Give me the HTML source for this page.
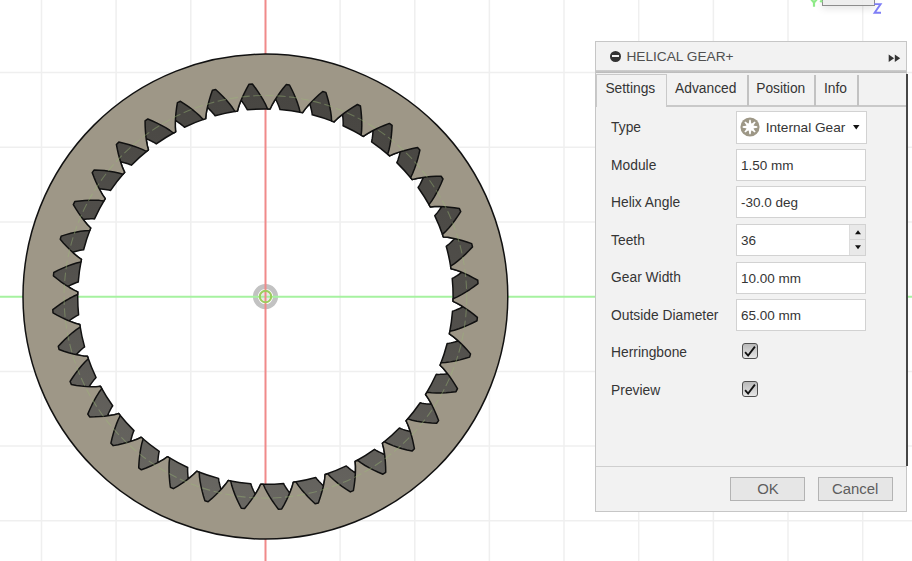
<!DOCTYPE html>
<html><head><meta charset="utf-8">
<style>
*{margin:0;padding:0;box-sizing:border-box}
html,body{width:912px;height:561px;overflow:hidden;background:#fff;font-family:"Liberation Sans",sans-serif}
#vp{position:absolute;left:0;top:0;width:912px;height:561px}
.panel{position:absolute;left:595px;top:41px;width:312px;height:471px;background:#f2f2f2;border:1px solid #c6c6c6}
.abs{position:absolute}
.txt{position:absolute;font-size:13.8px;line-height:16px;color:#353535;white-space:nowrap}
.hdrline{position:absolute;left:0;top:28px;width:310px;height:3px;background:linear-gradient(#cfcfcf,#b9b9b9)}
.ic{position:absolute;left:13.9px;top:8.7px;width:11.2px;height:11.2px;border-radius:50%;background:#333}
.ic:after{content:"";position:absolute;left:2.5px;top:4.6px;width:6.2px;height:2px;background:#f2f2f2}
.sep{position:absolute;top:33px;width:1.5px;height:31px;background:#c2c2c2}
.tabline{position:absolute;left:0;top:63px;width:310px;height:2px;background:#c9c9c9}
.box{position:absolute;left:140px;width:130px;height:32px;background:#fff;border:1px solid #d2d2d2}
.cb{position:absolute;left:146px;width:16px;height:16px;border:1.5px solid #4e4e4e;border-radius:3px;background:linear-gradient(#b9b9b9,#e6e6e6)}
.btn{position:absolute;top:435px;width:75px;height:24px;border:1px solid #b3b3b3;background:#e6e6e6}
.btxt{position:absolute;font-size:14.9px;line-height:16px;color:#5e5e5e;white-space:nowrap}
</style></head><body>
<div id="vp">
<svg width="912" height="561" style="position:absolute;left:0;top:0">
<g id="grid" stroke="#efefef" stroke-width="1.5">
<line x1="41.5" y1="0" x2="41.5" y2="561"/>
<line x1="116.1" y1="0" x2="116.1" y2="561"/>
<line x1="190.8" y1="0" x2="190.8" y2="561"/>
<line x1="340.1" y1="0" x2="340.1" y2="561"/>
<line x1="414.8" y1="0" x2="414.8" y2="561"/>
<line x1="489.4" y1="0" x2="489.4" y2="561"/>
<line x1="564.0" y1="0" x2="564.0" y2="561"/>
<line x1="638.7" y1="0" x2="638.7" y2="561"/>
<line x1="713.4" y1="0" x2="713.4" y2="561"/>
<line x1="788.0" y1="0" x2="788.0" y2="561"/>
<line x1="862.7" y1="0" x2="862.7" y2="561"/>
<line x1="0" y1="72.5" x2="912" y2="72.5"/>
<line x1="0" y1="147.2" x2="912" y2="147.2"/>
<line x1="0" y1="221.9" x2="912" y2="221.9"/>
<line x1="0" y1="371.4" x2="912" y2="371.4"/>
<line x1="0" y1="446.1" x2="912" y2="446.1"/>
<line x1="0" y1="520.8" x2="912" y2="520.8"/>
</g>
<defs><filter id="bl" x="-50%" y="-50%" width="200%" height="200%"><feGaussianBlur stdDeviation="0.6"/></filter></defs>
<circle cx="265.5" cy="296.6" r="10.1" fill="none" stroke="#c2c2c2" stroke-width="5" filter="url(#bl)"/>
<circle cx="265.5" cy="296.6" r="4.5" fill="#e9e9e9"/>
<line x1="0" y1="296.8" x2="912" y2="296.8" stroke="#a6f2a0" stroke-width="2"/>
<line x1="265.5" y1="0" x2="265.5" y2="561" stroke="#f08a8a" stroke-width="2"/>
<defs><linearGradient id="dk" x1="0.6" y1="0" x2="0.4" y2="1"><stop offset="0" stop-color="#474541"/><stop offset="0.5" stop-color="#52504c"/><stop offset="1" stop-color="#6a6863"/></linearGradient></defs>
<path d="M48.40 296.60 A217.00 217.00 0 1 1 482.40 296.60 A217.00 217.00 0 1 1 48.40 296.60 Z M270.15 108.96 L270.86 107.28 L271.70 105.60 L272.60 103.94 L273.55 102.27 L274.55 100.62 L275.58 98.96 L276.44 100.71 L277.27 102.46 L278.04 104.22 L278.77 105.97 L279.43 107.72 L279.96 109.47 A187.70 187.70 0 0 1 302.66 112.64 L302.66 112.64 L303.65 111.10 L304.77 109.60 L305.95 108.11 L307.17 106.64 L308.44 105.18 L309.75 103.74 L310.29 105.61 L310.80 107.47 L311.26 109.33 L311.67 111.19 L312.02 113.03 L312.24 114.84 A187.70 187.70 0 0 1 334.04 121.90 L334.04 121.90 L335.28 120.56 L336.64 119.28 L338.06 118.02 L339.53 116.78 L341.03 115.56 L342.57 114.37 L342.78 116.30 L342.95 118.23 L343.08 120.14 L343.16 122.04 L343.19 123.91 L343.09 125.73 A187.70 187.70 0 0 1 363.33 136.47 L363.33 136.47 L364.79 135.37 L366.35 134.34 L367.97 133.35 L369.62 132.38 L371.32 131.45 L373.04 130.53 L372.91 132.48 L372.74 134.41 L372.54 136.31 L372.29 138.19 L371.99 140.04 L371.58 141.82 A187.70 187.70 0 0 1 389.65 155.91 L389.65 155.91 L391.27 155.08 L392.99 154.34 L394.76 153.64 L396.56 152.98 L398.39 152.35 L400.24 151.75 L399.77 153.64 L399.28 155.51 L398.75 157.35 L398.18 159.16 L397.56 160.93 L396.84 162.61 A187.70 187.70 0 0 1 412.19 179.63 L412.19 179.63 L413.94 179.09 L415.76 178.65 L417.62 178.27 L419.50 177.93 L421.41 177.63 L423.34 177.36 L422.56 179.15 L421.74 180.90 L420.90 182.62 L420.03 184.31 L419.11 185.94 L418.11 187.47 A187.70 187.70 0 0 1 430.28 206.89 L430.28 206.89 L432.09 206.67 L433.96 206.56 L435.85 206.50 L437.77 206.50 L439.70 206.53 L441.65 206.60 L440.57 208.22 L439.46 209.81 L438.33 211.36 L437.18 212.86 L435.99 214.31 L434.74 215.65 A187.70 187.70 0 0 1 443.35 236.89 L443.35 236.89 L445.17 236.98 L447.03 237.19 L448.91 237.47 L450.80 237.80 L452.69 238.17 L454.60 238.58 L453.25 239.98 L451.89 241.35 L450.51 242.68 L449.11 243.96 L447.69 245.18 L446.23 246.28 A187.70 187.70 0 0 1 451.01 268.69 L451.01 268.69 L452.79 269.10 L454.59 269.64 L456.39 270.23 L458.19 270.88 L460.00 271.58 L461.80 272.31 L460.23 273.46 L458.65 274.57 L457.06 275.64 L455.46 276.66 L453.85 277.62 L452.22 278.45 A187.70 187.70 0 0 1 453.04 301.35 L453.04 301.35 L454.72 302.06 L456.40 302.90 L458.06 303.80 L459.73 304.75 L461.38 305.75 L463.04 306.78 L461.29 307.64 L459.54 308.47 L457.78 309.24 L456.03 309.97 L454.28 310.63 L452.53 311.16 A187.70 187.70 0 0 1 449.36 333.86 L449.36 333.86 L450.90 334.85 L452.40 335.97 L453.89 337.15 L455.36 338.37 L456.82 339.64 L458.26 340.95 L456.39 341.49 L454.53 342.00 L452.67 342.46 L450.81 342.87 L448.97 343.22 L447.16 343.44 A187.70 187.70 0 0 1 440.10 365.24 L440.10 365.24 L441.44 366.48 L442.72 367.84 L443.98 369.26 L445.22 370.73 L446.44 372.23 L447.63 373.77 L445.70 373.98 L443.77 374.15 L441.86 374.28 L439.96 374.36 L438.09 374.39 L436.27 374.29 A187.70 187.70 0 0 1 425.53 394.53 L425.53 394.53 L426.63 395.99 L427.66 397.55 L428.65 399.17 L429.62 400.82 L430.55 402.52 L431.47 404.24 L429.52 404.11 L427.59 403.94 L425.69 403.74 L423.81 403.49 L421.96 403.19 L420.18 402.78 A187.70 187.70 0 0 1 406.09 420.85 L406.09 420.85 L406.92 422.47 L407.66 424.19 L408.36 425.96 L409.02 427.76 L409.65 429.59 L410.25 431.44 L408.36 430.97 L406.49 430.48 L404.65 429.95 L402.84 429.38 L401.07 428.76 L399.39 428.04 A187.70 187.70 0 0 1 382.37 443.39 L382.37 443.39 L382.91 445.14 L383.35 446.96 L383.73 448.82 L384.07 450.70 L384.37 452.61 L384.64 454.54 L382.85 453.76 L381.10 452.94 L379.38 452.10 L377.69 451.23 L376.06 450.31 L374.53 449.31 A187.70 187.70 0 0 1 355.11 461.48 L355.11 461.48 L355.33 463.29 L355.44 465.16 L355.50 467.05 L355.50 468.97 L355.47 470.90 L355.40 472.85 L353.78 471.77 L352.19 470.66 L350.64 469.53 L349.14 468.38 L347.69 467.19 L346.35 465.94 A187.70 187.70 0 0 1 325.11 474.55 L325.11 474.55 L325.02 476.37 L324.81 478.23 L324.53 480.11 L324.20 482.00 L323.83 483.89 L323.42 485.80 L322.02 484.45 L320.65 483.09 L319.32 481.71 L318.04 480.31 L316.82 478.89 L315.72 477.43 A187.70 187.70 0 0 1 293.31 482.21 L293.31 482.21 L292.90 483.99 L292.36 485.79 L291.77 487.59 L291.12 489.39 L290.42 491.20 L289.69 493.00 L288.54 491.43 L287.43 489.85 L286.36 488.26 L285.34 486.66 L284.38 485.05 L283.55 483.42 A187.70 187.70 0 0 1 260.65 484.24 L260.65 484.24 L259.94 485.92 L259.10 487.60 L258.20 489.26 L257.25 490.93 L256.25 492.58 L255.22 494.24 L254.36 492.49 L253.53 490.74 L252.76 488.98 L252.03 487.23 L251.37 485.48 L250.84 483.73 A187.70 187.70 0 0 1 228.14 480.56 L228.14 480.56 L227.15 482.10 L226.03 483.60 L224.85 485.09 L223.63 486.56 L222.36 488.02 L221.05 489.46 L220.51 487.59 L220.00 485.73 L219.54 483.87 L219.13 482.01 L218.78 480.17 L218.56 478.36 A187.70 187.70 0 0 1 196.76 471.30 L196.76 471.30 L195.52 472.64 L194.16 473.92 L192.74 475.18 L191.27 476.42 L189.77 477.64 L188.23 478.83 L188.02 476.90 L187.85 474.97 L187.72 473.06 L187.64 471.16 L187.61 469.29 L187.71 467.47 A187.70 187.70 0 0 1 167.47 456.73 L167.47 456.73 L166.01 457.83 L164.45 458.86 L162.83 459.85 L161.18 460.82 L159.48 461.75 L157.76 462.67 L157.89 460.72 L158.06 458.79 L158.26 456.89 L158.51 455.01 L158.81 453.16 L159.22 451.38 A187.70 187.70 0 0 1 141.15 437.29 L141.15 437.29 L139.53 438.12 L137.81 438.86 L136.04 439.56 L134.24 440.22 L132.41 440.85 L130.56 441.45 L131.03 439.56 L131.52 437.69 L132.05 435.85 L132.62 434.04 L133.24 432.27 L133.96 430.59 A187.70 187.70 0 0 1 118.61 413.57 L118.61 413.57 L116.86 414.11 L115.04 414.55 L113.18 414.93 L111.30 415.27 L109.39 415.57 L107.46 415.84 L108.24 414.05 L109.06 412.30 L109.90 410.58 L110.77 408.89 L111.69 407.26 L112.69 405.73 A187.70 187.70 0 0 1 100.52 386.31 L100.52 386.31 L98.71 386.53 L96.84 386.64 L94.95 386.70 L93.03 386.70 L91.10 386.67 L89.15 386.60 L90.23 384.98 L91.34 383.39 L92.47 381.84 L93.62 380.34 L94.81 378.89 L96.06 377.55 A187.70 187.70 0 0 1 87.45 356.31 L87.45 356.31 L85.63 356.22 L83.77 356.01 L81.89 355.73 L80.00 355.40 L78.11 355.03 L76.20 354.62 L77.55 353.22 L78.91 351.85 L80.29 350.52 L81.69 349.24 L83.11 348.02 L84.57 346.92 A187.70 187.70 0 0 1 79.79 324.51 L79.79 324.51 L78.01 324.10 L76.21 323.56 L74.41 322.97 L72.61 322.32 L70.80 321.62 L69.00 320.89 L70.57 319.74 L72.15 318.63 L73.74 317.56 L75.34 316.54 L76.95 315.58 L78.58 314.75 A187.70 187.70 0 0 1 77.76 291.85 L77.76 291.85 L76.08 291.14 L74.40 290.30 L72.74 289.40 L71.07 288.45 L69.42 287.45 L67.76 286.42 L69.51 285.56 L71.26 284.73 L73.02 283.96 L74.77 283.23 L76.52 282.57 L78.27 282.04 A187.70 187.70 0 0 1 81.44 259.34 L81.44 259.34 L79.90 258.35 L78.40 257.23 L76.91 256.05 L75.44 254.83 L73.98 253.56 L72.54 252.25 L74.41 251.71 L76.27 251.20 L78.13 250.74 L79.99 250.33 L81.83 249.98 L83.64 249.76 A187.70 187.70 0 0 1 90.70 227.96 L90.70 227.96 L89.36 226.72 L88.08 225.36 L86.82 223.94 L85.58 222.47 L84.36 220.97 L83.17 219.43 L85.10 219.22 L87.03 219.05 L88.94 218.92 L90.84 218.84 L92.71 218.81 L94.53 218.91 A187.70 187.70 0 0 1 105.27 198.67 L105.27 198.67 L104.17 197.21 L103.14 195.65 L102.15 194.03 L101.18 192.38 L100.25 190.68 L99.33 188.96 L101.28 189.09 L103.21 189.26 L105.11 189.46 L106.99 189.71 L108.84 190.01 L110.62 190.42 A187.70 187.70 0 0 1 124.71 172.35 L124.71 172.35 L123.88 170.73 L123.14 169.01 L122.44 167.24 L121.78 165.44 L121.15 163.61 L120.55 161.76 L122.44 162.23 L124.31 162.72 L126.15 163.25 L127.96 163.82 L129.73 164.44 L131.41 165.16 A187.70 187.70 0 0 1 148.43 149.81 L148.43 149.81 L147.89 148.06 L147.45 146.24 L147.07 144.38 L146.73 142.50 L146.43 140.59 L146.16 138.66 L147.95 139.44 L149.70 140.26 L151.42 141.10 L153.11 141.97 L154.74 142.89 L156.27 143.89 A187.70 187.70 0 0 1 175.69 131.72 L175.69 131.72 L175.47 129.91 L175.36 128.04 L175.30 126.15 L175.30 124.23 L175.33 122.30 L175.40 120.35 L177.02 121.43 L178.61 122.54 L180.16 123.67 L181.66 124.82 L183.11 126.01 L184.45 127.26 A187.70 187.70 0 0 1 205.69 118.65 L205.69 118.65 L205.78 116.83 L205.99 114.97 L206.27 113.09 L206.60 111.20 L206.97 109.31 L207.38 107.40 L208.78 108.75 L210.15 110.11 L211.48 111.49 L212.76 112.89 L213.98 114.31 L215.08 115.77 A187.70 187.70 0 0 1 237.49 110.99 L237.49 110.99 L237.90 109.21 L238.44 107.41 L239.03 105.61 L239.68 103.81 L240.38 102.00 L241.11 100.20 L242.26 101.77 L243.37 103.35 L244.44 104.94 L245.46 106.54 L246.42 108.15 L247.25 109.78 A187.70 187.70 0 0 1 270.15 108.96 Z" fill="url(#dk)" fill-rule="evenodd"/>
<path d="M270.15 108.96 L270.86 107.28 L271.70 105.60 L272.60 103.94 L273.55 102.27 L274.55 100.62 L275.58 98.96 L276.44 100.71 L277.27 102.46 L278.04 104.22 L278.77 105.97 L279.43 107.72 L279.96 109.47 A187.70 187.70 0 0 1 302.66 112.64 L302.66 112.64 L303.65 111.10 L304.77 109.60 L305.95 108.11 L307.17 106.64 L308.44 105.18 L309.75 103.74 L310.29 105.61 L310.80 107.47 L311.26 109.33 L311.67 111.19 L312.02 113.03 L312.24 114.84 A187.70 187.70 0 0 1 334.04 121.90 L334.04 121.90 L335.28 120.56 L336.64 119.28 L338.06 118.02 L339.53 116.78 L341.03 115.56 L342.57 114.37 L342.78 116.30 L342.95 118.23 L343.08 120.14 L343.16 122.04 L343.19 123.91 L343.09 125.73 A187.70 187.70 0 0 1 363.33 136.47 L363.33 136.47 L364.79 135.37 L366.35 134.34 L367.97 133.35 L369.62 132.38 L371.32 131.45 L373.04 130.53 L372.91 132.48 L372.74 134.41 L372.54 136.31 L372.29 138.19 L371.99 140.04 L371.58 141.82 A187.70 187.70 0 0 1 389.65 155.91 L389.65 155.91 L391.27 155.08 L392.99 154.34 L394.76 153.64 L396.56 152.98 L398.39 152.35 L400.24 151.75 L399.77 153.64 L399.28 155.51 L398.75 157.35 L398.18 159.16 L397.56 160.93 L396.84 162.61 A187.70 187.70 0 0 1 412.19 179.63 L412.19 179.63 L413.94 179.09 L415.76 178.65 L417.62 178.27 L419.50 177.93 L421.41 177.63 L423.34 177.36 L422.56 179.15 L421.74 180.90 L420.90 182.62 L420.03 184.31 L419.11 185.94 L418.11 187.47 A187.70 187.70 0 0 1 430.28 206.89 L430.28 206.89 L432.09 206.67 L433.96 206.56 L435.85 206.50 L437.77 206.50 L439.70 206.53 L441.65 206.60 L440.57 208.22 L439.46 209.81 L438.33 211.36 L437.18 212.86 L435.99 214.31 L434.74 215.65 A187.70 187.70 0 0 1 443.35 236.89 L443.35 236.89 L445.17 236.98 L447.03 237.19 L448.91 237.47 L450.80 237.80 L452.69 238.17 L454.60 238.58 L453.25 239.98 L451.89 241.35 L450.51 242.68 L449.11 243.96 L447.69 245.18 L446.23 246.28 A187.70 187.70 0 0 1 451.01 268.69 L451.01 268.69 L452.79 269.10 L454.59 269.64 L456.39 270.23 L458.19 270.88 L460.00 271.58 L461.80 272.31 L460.23 273.46 L458.65 274.57 L457.06 275.64 L455.46 276.66 L453.85 277.62 L452.22 278.45 A187.70 187.70 0 0 1 453.04 301.35 L453.04 301.35 L454.72 302.06 L456.40 302.90 L458.06 303.80 L459.73 304.75 L461.38 305.75 L463.04 306.78 L461.29 307.64 L459.54 308.47 L457.78 309.24 L456.03 309.97 L454.28 310.63 L452.53 311.16 A187.70 187.70 0 0 1 449.36 333.86 L449.36 333.86 L450.90 334.85 L452.40 335.97 L453.89 337.15 L455.36 338.37 L456.82 339.64 L458.26 340.95 L456.39 341.49 L454.53 342.00 L452.67 342.46 L450.81 342.87 L448.97 343.22 L447.16 343.44 A187.70 187.70 0 0 1 440.10 365.24 L440.10 365.24 L441.44 366.48 L442.72 367.84 L443.98 369.26 L445.22 370.73 L446.44 372.23 L447.63 373.77 L445.70 373.98 L443.77 374.15 L441.86 374.28 L439.96 374.36 L438.09 374.39 L436.27 374.29 A187.70 187.70 0 0 1 425.53 394.53 L425.53 394.53 L426.63 395.99 L427.66 397.55 L428.65 399.17 L429.62 400.82 L430.55 402.52 L431.47 404.24 L429.52 404.11 L427.59 403.94 L425.69 403.74 L423.81 403.49 L421.96 403.19 L420.18 402.78 A187.70 187.70 0 0 1 406.09 420.85 L406.09 420.85 L406.92 422.47 L407.66 424.19 L408.36 425.96 L409.02 427.76 L409.65 429.59 L410.25 431.44 L408.36 430.97 L406.49 430.48 L404.65 429.95 L402.84 429.38 L401.07 428.76 L399.39 428.04 A187.70 187.70 0 0 1 382.37 443.39 L382.37 443.39 L382.91 445.14 L383.35 446.96 L383.73 448.82 L384.07 450.70 L384.37 452.61 L384.64 454.54 L382.85 453.76 L381.10 452.94 L379.38 452.10 L377.69 451.23 L376.06 450.31 L374.53 449.31 A187.70 187.70 0 0 1 355.11 461.48 L355.11 461.48 L355.33 463.29 L355.44 465.16 L355.50 467.05 L355.50 468.97 L355.47 470.90 L355.40 472.85 L353.78 471.77 L352.19 470.66 L350.64 469.53 L349.14 468.38 L347.69 467.19 L346.35 465.94 A187.70 187.70 0 0 1 325.11 474.55 L325.11 474.55 L325.02 476.37 L324.81 478.23 L324.53 480.11 L324.20 482.00 L323.83 483.89 L323.42 485.80 L322.02 484.45 L320.65 483.09 L319.32 481.71 L318.04 480.31 L316.82 478.89 L315.72 477.43 A187.70 187.70 0 0 1 293.31 482.21 L293.31 482.21 L292.90 483.99 L292.36 485.79 L291.77 487.59 L291.12 489.39 L290.42 491.20 L289.69 493.00 L288.54 491.43 L287.43 489.85 L286.36 488.26 L285.34 486.66 L284.38 485.05 L283.55 483.42 A187.70 187.70 0 0 1 260.65 484.24 L260.65 484.24 L259.94 485.92 L259.10 487.60 L258.20 489.26 L257.25 490.93 L256.25 492.58 L255.22 494.24 L254.36 492.49 L253.53 490.74 L252.76 488.98 L252.03 487.23 L251.37 485.48 L250.84 483.73 A187.70 187.70 0 0 1 228.14 480.56 L228.14 480.56 L227.15 482.10 L226.03 483.60 L224.85 485.09 L223.63 486.56 L222.36 488.02 L221.05 489.46 L220.51 487.59 L220.00 485.73 L219.54 483.87 L219.13 482.01 L218.78 480.17 L218.56 478.36 A187.70 187.70 0 0 1 196.76 471.30 L196.76 471.30 L195.52 472.64 L194.16 473.92 L192.74 475.18 L191.27 476.42 L189.77 477.64 L188.23 478.83 L188.02 476.90 L187.85 474.97 L187.72 473.06 L187.64 471.16 L187.61 469.29 L187.71 467.47 A187.70 187.70 0 0 1 167.47 456.73 L167.47 456.73 L166.01 457.83 L164.45 458.86 L162.83 459.85 L161.18 460.82 L159.48 461.75 L157.76 462.67 L157.89 460.72 L158.06 458.79 L158.26 456.89 L158.51 455.01 L158.81 453.16 L159.22 451.38 A187.70 187.70 0 0 1 141.15 437.29 L141.15 437.29 L139.53 438.12 L137.81 438.86 L136.04 439.56 L134.24 440.22 L132.41 440.85 L130.56 441.45 L131.03 439.56 L131.52 437.69 L132.05 435.85 L132.62 434.04 L133.24 432.27 L133.96 430.59 A187.70 187.70 0 0 1 118.61 413.57 L118.61 413.57 L116.86 414.11 L115.04 414.55 L113.18 414.93 L111.30 415.27 L109.39 415.57 L107.46 415.84 L108.24 414.05 L109.06 412.30 L109.90 410.58 L110.77 408.89 L111.69 407.26 L112.69 405.73 A187.70 187.70 0 0 1 100.52 386.31 L100.52 386.31 L98.71 386.53 L96.84 386.64 L94.95 386.70 L93.03 386.70 L91.10 386.67 L89.15 386.60 L90.23 384.98 L91.34 383.39 L92.47 381.84 L93.62 380.34 L94.81 378.89 L96.06 377.55 A187.70 187.70 0 0 1 87.45 356.31 L87.45 356.31 L85.63 356.22 L83.77 356.01 L81.89 355.73 L80.00 355.40 L78.11 355.03 L76.20 354.62 L77.55 353.22 L78.91 351.85 L80.29 350.52 L81.69 349.24 L83.11 348.02 L84.57 346.92 A187.70 187.70 0 0 1 79.79 324.51 L79.79 324.51 L78.01 324.10 L76.21 323.56 L74.41 322.97 L72.61 322.32 L70.80 321.62 L69.00 320.89 L70.57 319.74 L72.15 318.63 L73.74 317.56 L75.34 316.54 L76.95 315.58 L78.58 314.75 A187.70 187.70 0 0 1 77.76 291.85 L77.76 291.85 L76.08 291.14 L74.40 290.30 L72.74 289.40 L71.07 288.45 L69.42 287.45 L67.76 286.42 L69.51 285.56 L71.26 284.73 L73.02 283.96 L74.77 283.23 L76.52 282.57 L78.27 282.04 A187.70 187.70 0 0 1 81.44 259.34 L81.44 259.34 L79.90 258.35 L78.40 257.23 L76.91 256.05 L75.44 254.83 L73.98 253.56 L72.54 252.25 L74.41 251.71 L76.27 251.20 L78.13 250.74 L79.99 250.33 L81.83 249.98 L83.64 249.76 A187.70 187.70 0 0 1 90.70 227.96 L90.70 227.96 L89.36 226.72 L88.08 225.36 L86.82 223.94 L85.58 222.47 L84.36 220.97 L83.17 219.43 L85.10 219.22 L87.03 219.05 L88.94 218.92 L90.84 218.84 L92.71 218.81 L94.53 218.91 A187.70 187.70 0 0 1 105.27 198.67 L105.27 198.67 L104.17 197.21 L103.14 195.65 L102.15 194.03 L101.18 192.38 L100.25 190.68 L99.33 188.96 L101.28 189.09 L103.21 189.26 L105.11 189.46 L106.99 189.71 L108.84 190.01 L110.62 190.42 A187.70 187.70 0 0 1 124.71 172.35 L124.71 172.35 L123.88 170.73 L123.14 169.01 L122.44 167.24 L121.78 165.44 L121.15 163.61 L120.55 161.76 L122.44 162.23 L124.31 162.72 L126.15 163.25 L127.96 163.82 L129.73 164.44 L131.41 165.16 A187.70 187.70 0 0 1 148.43 149.81 L148.43 149.81 L147.89 148.06 L147.45 146.24 L147.07 144.38 L146.73 142.50 L146.43 140.59 L146.16 138.66 L147.95 139.44 L149.70 140.26 L151.42 141.10 L153.11 141.97 L154.74 142.89 L156.27 143.89 A187.70 187.70 0 0 1 175.69 131.72 L175.69 131.72 L175.47 129.91 L175.36 128.04 L175.30 126.15 L175.30 124.23 L175.33 122.30 L175.40 120.35 L177.02 121.43 L178.61 122.54 L180.16 123.67 L181.66 124.82 L183.11 126.01 L184.45 127.26 A187.70 187.70 0 0 1 205.69 118.65 L205.69 118.65 L205.78 116.83 L205.99 114.97 L206.27 113.09 L206.60 111.20 L206.97 109.31 L207.38 107.40 L208.78 108.75 L210.15 110.11 L211.48 111.49 L212.76 112.89 L213.98 114.31 L215.08 115.77 A187.70 187.70 0 0 1 237.49 110.99 L237.49 110.99 L237.90 109.21 L238.44 107.41 L239.03 105.61 L239.68 103.81 L240.38 102.00 L241.11 100.20 L242.26 101.77 L243.37 103.35 L244.44 104.94 L245.46 106.54 L246.42 108.15 L247.25 109.78 A187.70 187.70 0 0 1 270.15 108.96 Z" fill="none" stroke="#111" stroke-width="1.50" stroke-linejoin="round"/>
<path d="M23.00 296.60 A242.40 242.40 0 1 1 507.80 296.60 A242.40 242.40 0 1 1 23.00 296.60 Z M270.15 108.96 L272.12 104.80 L274.51 100.68 L277.14 96.59 L279.97 92.55 L282.99 88.56 L286.19 84.62 L289.51 84.97 L291.81 89.49 L293.92 94.03 L295.85 98.58 L297.56 103.12 L299.03 107.65 L300.09 112.13 A187.70 187.70 0 0 1 302.66 112.64 L302.66 112.64 L305.33 108.88 L308.39 105.24 L311.69 101.67 L315.18 98.18 L318.85 94.77 L322.68 91.45 L325.90 92.37 L327.37 97.23 L328.66 102.06 L329.77 106.87 L330.67 111.65 L331.33 116.36 L331.59 120.96 A187.70 187.70 0 0 1 334.04 121.90 L334.04 121.90 L337.32 118.67 L340.97 115.61 L344.84 112.67 L348.88 109.84 L353.09 107.12 L357.43 104.51 L360.44 105.98 L361.05 111.02 L361.48 116.00 L361.74 120.93 L361.79 125.79 L361.63 130.55 L361.09 135.12 A187.70 187.70 0 0 1 363.33 136.47 L363.33 136.47 L367.12 133.86 L371.25 131.48 L375.57 129.26 L380.04 127.18 L384.66 125.23 L389.39 123.41 L392.10 125.38 L391.82 130.44 L391.39 135.43 L390.78 140.33 L389.99 145.12 L389.00 149.78 L387.67 154.19 A187.70 187.70 0 0 1 389.65 155.91 L389.65 155.91 L393.84 154.00 L398.32 152.37 L402.95 150.93 L407.72 149.66 L412.60 148.54 L417.58 147.57 L419.90 149.98 L418.76 154.92 L417.46 159.76 L416.01 164.48 L414.40 169.06 L412.61 173.47 L410.55 177.59 A187.70 187.70 0 0 1 412.19 179.63 L412.19 179.63 L416.65 178.47 L421.34 177.64 L426.16 177.03 L431.08 176.61 L436.08 176.35 L441.15 176.26 L443.02 179.04 L441.03 183.70 L438.91 188.24 L436.66 192.64 L434.29 196.87 L431.76 200.91 L429.01 204.60 A187.70 187.70 0 0 1 430.28 206.89 L430.28 206.89 L434.86 206.52 L439.63 206.53 L444.48 206.76 L449.40 207.20 L454.36 207.81 L459.38 208.61 L460.73 211.67 L457.96 215.92 L455.09 220.02 L452.12 223.95 L449.04 227.71 L445.85 231.25 L442.50 234.41 A187.70 187.70 0 0 1 443.35 236.89 L443.35 236.89 L447.93 237.32 L452.62 238.15 L457.36 239.23 L462.13 240.51 L466.91 241.98 L471.71 243.63 L472.51 246.88 L469.05 250.58 L465.51 254.12 L461.89 257.48 L458.21 260.65 L454.45 263.58 L450.61 266.11 A187.70 187.70 0 0 1 451.01 268.69 L451.01 268.69 L455.45 269.92 L459.93 271.55 L464.41 273.43 L468.88 275.52 L473.34 277.80 L477.77 280.26 L478.00 283.60 L473.95 286.64 L469.84 289.51 L465.70 292.20 L461.52 294.67 L457.32 296.91 L453.09 298.73 A187.70 187.70 0 0 1 453.04 301.35 L453.04 301.35 L457.20 303.32 L461.32 305.71 L465.41 308.34 L469.45 311.17 L473.44 314.19 L477.38 317.39 L477.03 320.71 L472.51 323.01 L467.97 325.12 L463.42 327.05 L458.88 328.76 L454.35 330.23 L449.87 331.29 A187.70 187.70 0 0 1 449.36 333.86 L449.36 333.86 L453.12 336.53 L456.76 339.59 L460.33 342.89 L463.82 346.38 L467.23 350.05 L470.55 353.88 L469.63 357.10 L464.77 358.57 L459.94 359.86 L455.13 360.97 L450.35 361.87 L445.64 362.53 L441.04 362.79 A187.70 187.70 0 0 1 440.10 365.24 L440.10 365.24 L443.33 368.52 L446.39 372.17 L449.33 376.04 L452.16 380.08 L454.88 384.29 L457.49 388.63 L456.02 391.64 L450.98 392.25 L446.00 392.68 L441.07 392.94 L436.21 392.99 L431.45 392.83 L426.88 392.29 A187.70 187.70 0 0 1 425.53 394.53 L425.53 394.53 L428.14 398.32 L430.52 402.45 L432.74 406.77 L434.82 411.24 L436.77 415.86 L438.59 420.59 L436.62 423.30 L431.56 423.02 L426.57 422.59 L421.67 421.98 L416.88 421.19 L412.22 420.20 L407.81 418.87 A187.70 187.70 0 0 1 406.09 420.85 L406.09 420.85 L408.00 425.04 L409.63 429.52 L411.07 434.15 L412.34 438.92 L413.46 443.80 L414.43 448.78 L412.02 451.10 L407.08 449.96 L402.24 448.66 L397.52 447.21 L392.94 445.60 L388.53 443.81 L384.41 441.75 A187.70 187.70 0 0 1 382.37 443.39 L382.37 443.39 L383.53 447.85 L384.36 452.54 L384.97 457.36 L385.39 462.28 L385.65 467.28 L385.74 472.35 L382.96 474.22 L378.30 472.23 L373.76 470.11 L369.36 467.86 L365.13 465.49 L361.09 462.96 L357.40 460.21 A187.70 187.70 0 0 1 355.11 461.48 L355.11 461.48 L355.48 466.06 L355.47 470.83 L355.24 475.68 L354.80 480.60 L354.19 485.56 L353.39 490.58 L350.33 491.93 L346.08 489.16 L341.98 486.29 L338.05 483.32 L334.29 480.24 L330.75 477.05 L327.59 473.70 A187.70 187.70 0 0 1 325.11 474.55 L325.11 474.55 L324.68 479.13 L323.85 483.82 L322.77 488.56 L321.49 493.33 L320.02 498.11 L318.37 502.91 L315.12 503.71 L311.42 500.25 L307.88 496.71 L304.52 493.09 L301.35 489.41 L298.42 485.65 L295.89 481.81 A187.70 187.70 0 0 1 293.31 482.21 L293.31 482.21 L292.08 486.65 L290.45 491.13 L288.57 495.61 L286.48 500.08 L284.20 504.54 L281.74 508.97 L278.40 509.20 L275.36 505.15 L272.49 501.04 L269.80 496.90 L267.33 492.72 L265.09 488.52 L263.27 484.29 A187.70 187.70 0 0 1 260.65 484.24 L260.65 484.24 L258.68 488.40 L256.29 492.52 L253.66 496.61 L250.83 500.65 L247.81 504.64 L244.61 508.58 L241.29 508.23 L238.99 503.71 L236.88 499.17 L234.95 494.62 L233.24 490.08 L231.77 485.55 L230.71 481.07 A187.70 187.70 0 0 1 228.14 480.56 L228.14 480.56 L225.47 484.32 L222.41 487.96 L219.11 491.53 L215.62 495.02 L211.95 498.43 L208.12 501.75 L204.90 500.83 L203.43 495.97 L202.14 491.14 L201.03 486.33 L200.13 481.55 L199.47 476.84 L199.21 472.24 A187.70 187.70 0 0 1 196.76 471.30 L196.76 471.30 L193.48 474.53 L189.83 477.59 L185.96 480.53 L181.92 483.36 L177.71 486.08 L173.37 488.69 L170.36 487.22 L169.75 482.18 L169.32 477.20 L169.06 472.27 L169.01 467.41 L169.17 462.65 L169.71 458.08 A187.70 187.70 0 0 1 167.47 456.73 L167.47 456.73 L163.68 459.34 L159.55 461.72 L155.23 463.94 L150.76 466.02 L146.14 467.97 L141.41 469.79 L138.70 467.82 L138.98 462.76 L139.41 457.77 L140.02 452.87 L140.81 448.08 L141.80 443.42 L143.13 439.01 A187.70 187.70 0 0 1 141.15 437.29 L141.15 437.29 L136.96 439.20 L132.48 440.83 L127.85 442.27 L123.08 443.54 L118.20 444.66 L113.22 445.63 L110.90 443.22 L112.04 438.28 L113.34 433.44 L114.79 428.72 L116.40 424.14 L118.19 419.73 L120.25 415.61 A187.70 187.70 0 0 1 118.61 413.57 L118.61 413.57 L114.15 414.73 L109.46 415.56 L104.64 416.17 L99.72 416.59 L94.72 416.85 L89.65 416.94 L87.78 414.16 L89.77 409.50 L91.89 404.96 L94.14 400.56 L96.51 396.33 L99.04 392.29 L101.79 388.60 A187.70 187.70 0 0 1 100.52 386.31 L100.52 386.31 L95.94 386.68 L91.17 386.67 L86.32 386.44 L81.40 386.00 L76.44 385.39 L71.42 384.59 L70.07 381.53 L72.84 377.28 L75.71 373.18 L78.68 369.25 L81.76 365.49 L84.95 361.95 L88.30 358.79 A187.70 187.70 0 0 1 87.45 356.31 L87.45 356.31 L82.87 355.88 L78.18 355.05 L73.44 353.97 L68.67 352.69 L63.89 351.22 L59.09 349.57 L58.29 346.32 L61.75 342.62 L65.29 339.08 L68.91 335.72 L72.59 332.55 L76.35 329.62 L80.19 327.09 A187.70 187.70 0 0 1 79.79 324.51 L79.79 324.51 L75.35 323.28 L70.87 321.65 L66.39 319.77 L61.92 317.68 L57.46 315.40 L53.03 312.94 L52.80 309.60 L56.85 306.56 L60.96 303.69 L65.10 301.00 L69.28 298.53 L73.48 296.29 L77.71 294.47 A187.70 187.70 0 0 1 77.76 291.85 L77.76 291.85 L73.60 289.88 L69.48 287.49 L65.39 284.86 L61.35 282.03 L57.36 279.01 L53.42 275.81 L53.77 272.49 L58.29 270.19 L62.83 268.08 L67.38 266.15 L71.92 264.44 L76.45 262.97 L80.93 261.91 A187.70 187.70 0 0 1 81.44 259.34 L81.44 259.34 L77.68 256.67 L74.04 253.61 L70.47 250.31 L66.98 246.82 L63.57 243.15 L60.25 239.32 L61.17 236.10 L66.03 234.63 L70.86 233.34 L75.67 232.23 L80.45 231.33 L85.16 230.67 L89.76 230.41 A187.70 187.70 0 0 1 90.70 227.96 L90.70 227.96 L87.47 224.68 L84.41 221.03 L81.47 217.16 L78.64 213.12 L75.92 208.91 L73.31 204.57 L74.78 201.56 L79.82 200.95 L84.80 200.52 L89.73 200.26 L94.59 200.21 L99.35 200.37 L103.92 200.91 A187.70 187.70 0 0 1 105.27 198.67 L105.27 198.67 L102.66 194.88 L100.28 190.75 L98.06 186.43 L95.98 181.96 L94.03 177.34 L92.21 172.61 L94.18 169.90 L99.24 170.18 L104.23 170.61 L109.13 171.22 L113.92 172.01 L118.58 173.00 L122.99 174.33 A187.70 187.70 0 0 1 124.71 172.35 L124.71 172.35 L122.80 168.16 L121.17 163.68 L119.73 159.05 L118.46 154.28 L117.34 149.40 L116.37 144.42 L118.78 142.10 L123.72 143.24 L128.56 144.54 L133.28 145.99 L137.86 147.60 L142.27 149.39 L146.39 151.45 A187.70 187.70 0 0 1 148.43 149.81 L148.43 149.81 L147.27 145.35 L146.44 140.66 L145.83 135.84 L145.41 130.92 L145.15 125.92 L145.06 120.85 L147.84 118.98 L152.50 120.97 L157.04 123.09 L161.44 125.34 L165.67 127.71 L169.71 130.24 L173.40 132.99 A187.70 187.70 0 0 1 175.69 131.72 L175.69 131.72 L175.32 127.14 L175.33 122.37 L175.56 117.52 L176.00 112.60 L176.61 107.64 L177.41 102.62 L180.47 101.27 L184.72 104.04 L188.82 106.91 L192.75 109.88 L196.51 112.96 L200.05 116.15 L203.21 119.50 A187.70 187.70 0 0 1 205.69 118.65 L205.69 118.65 L206.12 114.07 L206.95 109.38 L208.03 104.64 L209.31 99.87 L210.78 95.09 L212.43 90.29 L215.68 89.49 L219.38 92.95 L222.92 96.49 L226.28 100.11 L229.45 103.79 L232.38 107.55 L234.91 111.39 A187.70 187.70 0 0 1 237.49 110.99 L237.49 110.99 L238.72 106.55 L240.35 102.07 L242.23 97.59 L244.32 93.12 L246.60 88.66 L249.06 84.23 L252.40 84.00 L255.44 88.05 L258.31 92.16 L261.00 96.30 L263.47 100.48 L265.71 104.68 L267.53 108.91 A187.70 187.70 0 0 1 270.15 108.96 Z" fill="#9e9787" fill-rule="evenodd" stroke="#111" stroke-width="1.50" stroke-linejoin="round"/>
<circle cx="265.40" cy="296.80" r="201.3" fill="none" stroke="#9cb878" stroke-opacity="0.42" stroke-width="1.1" stroke-dasharray="8.5 3.5"/>
<circle cx="265.5" cy="296.6" r="5.7" fill="none" stroke="#9dcb5e" stroke-width="2.1"/>
</svg>
<div class="panel">
 <div class="ic"></div>
 <div class="txt" style="left:30.4px;top:6.6px;color:#505050;font-size:13.7px">HELICAL GEAR+</div>
 <svg class="abs" style="left:292px;top:11.5px" width="14" height="9" viewBox="0 0 14 9"><path d="M0.7 0.6 L6.1 4.35 L0.7 8.1Z M6.8 0.6 L12.2 4.35 L6.8 8.1Z" fill="#333"/></svg>
 <div class="hdrline"></div>
 <div class="tabline"></div>
 <div class="abs" style="left:0;top:32px;width:71px;height:33px;border:1px solid #c9c9c9;border-bottom:none;background:#f2f2f2"></div>
 <div class="sep" style="left:151px"></div>
 <div class="sep" style="left:218px"></div>
 <div class="sep" style="left:261px"></div>
 <div class="txt" style="left:9.4px;top:38.8px">Settings</div>
 <div class="txt" style="left:79.1px;top:38.8px">Advanced</div>
 <div class="txt" style="left:160.2px;top:38.8px">Position</div>
 <div class="txt" style="left:228.0px;top:38.8px">Info</div>
 <div class="txt" style="left:15.1px;top:78.3px">Type</div>
 <div class="box" style="top:68.8px;height:33px;width:131px"></div>
 <svg class="abs" style="left:144.2px;top:75.0px" width="20" height="20" viewBox="-10 -10 20 20"><circle r="9.6" fill="#9d9786"/><circle r="3.7" fill="#fff"/><path d="M-1.4 -2.6 L-0.65 -7.3 L0.65 -7.3 L1.4 -2.6Z" fill="#fff" transform="rotate(0)"/><path d="M-1.4 -2.6 L-0.65 -7.3 L0.65 -7.3 L1.4 -2.6Z" fill="#fff" transform="rotate(45)"/><path d="M-1.4 -2.6 L-0.65 -7.3 L0.65 -7.3 L1.4 -2.6Z" fill="#fff" transform="rotate(90)"/><path d="M-1.4 -2.6 L-0.65 -7.3 L0.65 -7.3 L1.4 -2.6Z" fill="#fff" transform="rotate(135)"/><path d="M-1.4 -2.6 L-0.65 -7.3 L0.65 -7.3 L1.4 -2.6Z" fill="#fff" transform="rotate(180)"/><path d="M-1.4 -2.6 L-0.65 -7.3 L0.65 -7.3 L1.4 -2.6Z" fill="#fff" transform="rotate(225)"/><path d="M-1.4 -2.6 L-0.65 -7.3 L0.65 -7.3 L1.4 -2.6Z" fill="#fff" transform="rotate(270)"/><path d="M-1.4 -2.6 L-0.65 -7.3 L0.65 -7.3 L1.4 -2.6Z" fill="#fff" transform="rotate(315)"/></svg>
 <div class="txt" style="left:169.7px;top:78.1px;font-size:13.65px">Internal Gear</div>
 <svg class="abs" style="left:257px;top:83.2px" width="7" height="5"><path d="M0 0 L6.5 0 L3.25 4.6Z" fill="#111"/></svg>
 <div class="txt" style="left:15.1px;top:115.8px">Module</div>
 <div class="box" style="top:106.6px"></div>
 <div class="txt" style="left:144.9px;top:115.9px;font-size:13.5px">1.50 mm</div>
 <div class="txt" style="left:15.1px;top:153.3px">Helix Angle</div>
 <div class="box" style="top:144.2px"></div>
 <div class="txt" style="left:144.9px;top:153.4px;font-size:13.5px">-30.0 deg</div>
 <div class="txt" style="left:15.1px;top:190.8px">Teeth</div>
 <div class="box" style="top:181.8px"></div>
 <div class="txt" style="left:144.9px;top:190.9px;font-size:13.5px">36</div>
 <div class="abs" style="left:252.5px;top:182.8px;width:16.5px;height:30px;background:#e9e9e9;border-left:1px solid #dcdcdc"></div>
 <div class="abs" style="left:253.5px;top:197.3px;width:15.5px;height:1px;background:#d6d6d6"></div>
 <svg class="abs" style="left:258.5px;top:188.3px" width="7" height="5"><path d="M0 4.3 L6 4.3 L3 0.3Z" fill="#111"/></svg>
 <svg class="abs" style="left:258.5px;top:202.7px" width="7" height="5"><path d="M0 0.3 L6 0.3 L3 4.3Z" fill="#111"/></svg>
 <div class="txt" style="left:15.1px;top:228.4px">Gear Width</div>
 <div class="box" style="top:219.5px"></div>
 <div class="txt" style="left:144.9px;top:228.5px;font-size:13.5px">10.00 mm</div>
 <div class="txt" style="left:15.1px;top:265.9px">Outside Diameter</div>
 <div class="box" style="top:257.1px"></div>
 <div class="txt" style="left:144.9px;top:266.0px;font-size:13.5px">65.00 mm</div>
 <div class="txt" style="left:15.1px;top:303.4px">Herringbone</div>
 <div class="cb" style="top:301.1px"></div>
 <svg class="abs" style="left:146px;top:301.1px" width="16" height="16"><path d="M3.1 9.1 L6.1 12.6 L12.9 3.6" fill="none" stroke="#111" stroke-width="1.8"/></svg>
 <div class="txt" style="left:15.1px;top:340.9px">Preview</div>
 <div class="cb" style="top:339.2px"></div>
 <svg class="abs" style="left:146px;top:339.2px" width="16" height="16"><path d="M3.1 9.1 L6.1 12.6 L12.9 3.6" fill="none" stroke="#111" stroke-width="1.8"/></svg>
 <div class="abs" style="left:0;top:424px;width:310px;height:1px;background:#cfcfcf"></div>
 <div class="abs" style="left:310.4px;top:32px;width:1.5px;height:392px;background:#474747"></div>
 <div class="btn" style="left:134px"></div>
 <div class="btn" style="left:222px"></div>
 <div class="btxt" style="left:161.2px;top:439px">OK</div>
 <div class="btxt" style="left:236px;top:439px">Cancel</div>
</div>
<div class="abs" style="left:822px;top:-3px;width:53px;height:8.6px;background:rgba(236,236,236,0.88);border:1px solid #8d8d8d;box-shadow:0 3px 7px rgba(0,0,0,0.10)"></div>
<svg class="abs" style="left:800px;top:0" width="100" height="20"><path d="M10.5 -1.5 L14 2.5 L17.5 -1.5 M14 2.5 L14 6.8" fill="none" stroke="#8fea88" stroke-width="2.2"/><circle cx="21.2" cy="1.3" r="1.3" fill="#8fea88"/><path d="M74.3 4.1 L80.6 4.1 L74.6 12.7 L81 12.7" fill="none" stroke="#7e7ef6" stroke-width="1.9" stroke-linejoin="miter"/></svg>
</div>
</body></html>
